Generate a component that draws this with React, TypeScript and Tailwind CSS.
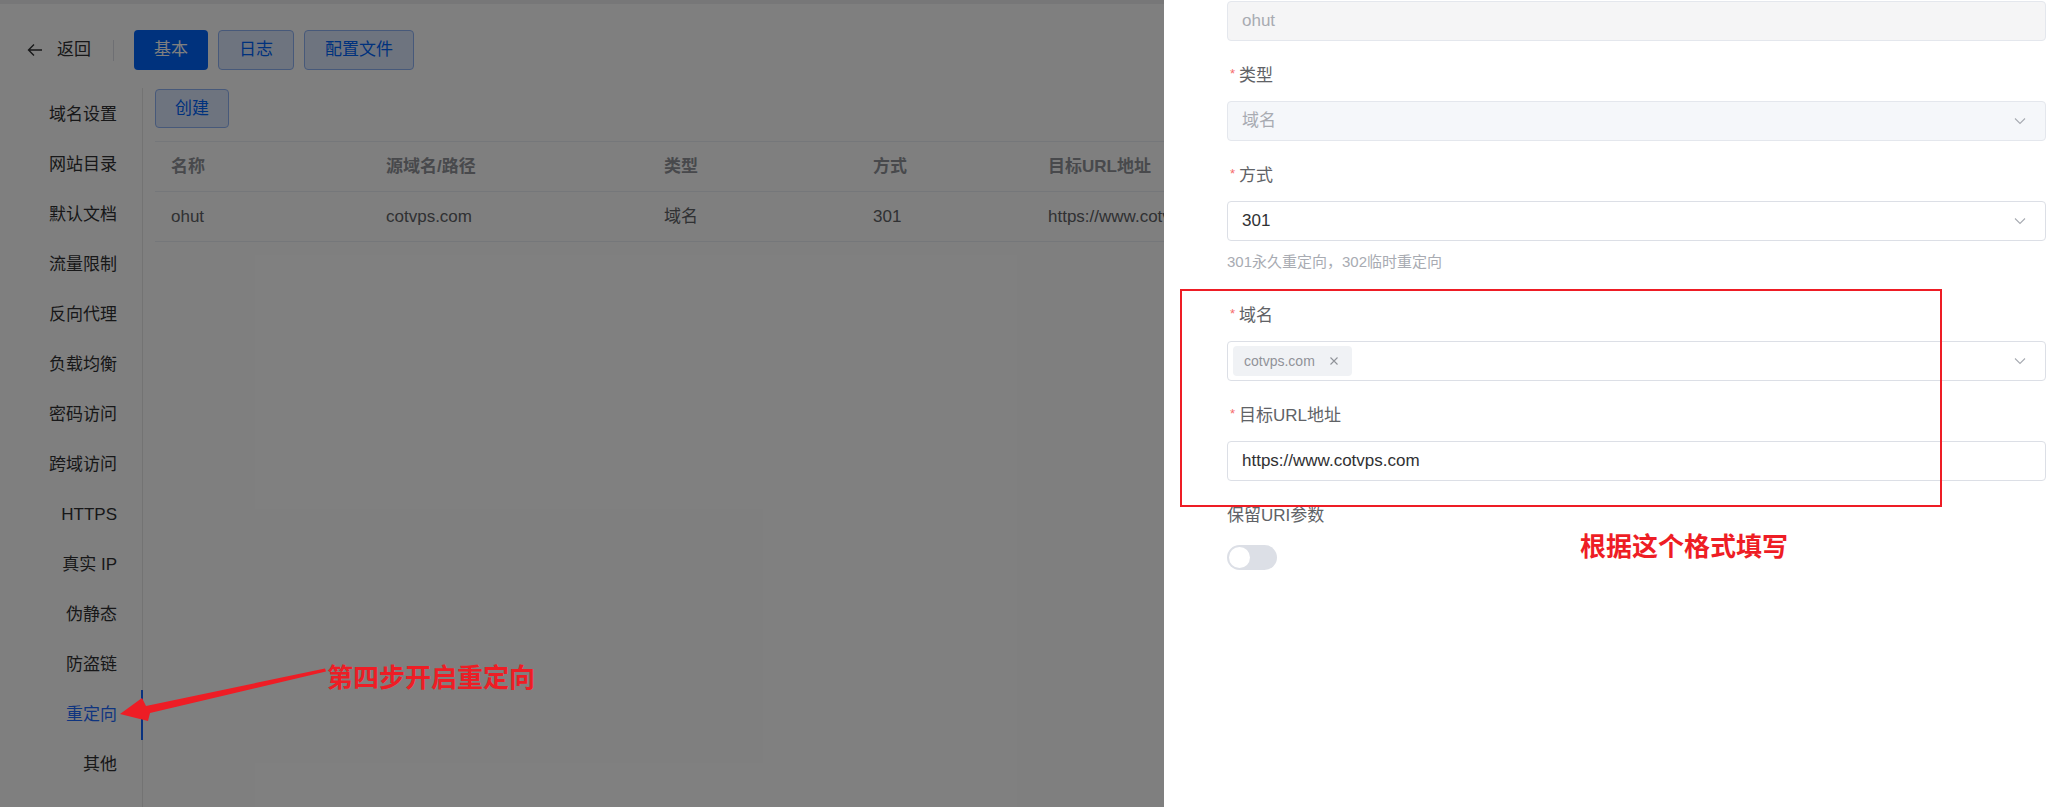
import { ReactNode } from 'react';

const menu = [
  '域名设置',
  '网站目录',
  '默认文档',
  '流量限制',
  '反向代理',
  '负载均衡',
  '密码访问',
  '跨域访问',
  'HTTPS',
  '真实 IP',
  '伪静态',
  '防盗链',
  '重定向',
  '其他',
];

const font = "font-['Liberation_Sans','Noto_Sans_CJK_SC',sans-serif]";

function Chevron() {
  return (
    <svg width="14" height="14" viewBox="0 0 14 14" fill="none" className="shrink-0">
      <path d="M2 4.5 L7 9.5 L12 4.5" stroke="#a8abb2" strokeWidth="1.1" />
    </svg>
  );
}

function Label({ children, required = true }: { children: ReactNode; required?: boolean }) {
  return (
    <div className="h-[26px] leading-[26px] mb-[12px] text-[17px] text-[#606266] flex items-center">
      {required && <span className="text-[#f56c6c] text-[13px] mr-[4px] ml-[3px] -mt-[4px]">*</span>}
      {children}
    </div>
  );
}

function Sidebar() {
  return (
    <ul className="w-[143px] shrink-0 border-r border-[#e6e6e6] pt-[2px]">
      {menu.map((item) => {
        const active = item === '重定向';
        return (
          <li
            key={item}
            className={
              'h-[50px] flex items-center justify-end pr-[24px] text-[17px] -mr-px border-r-2 ' +
              (active ? 'text-[#1f6bff] border-[#1364ff]' : 'text-[#303133] border-transparent')
            }
          >
            {item}
          </li>
        );
      })}
    </ul>
  );
}

function Table() {
  const cols = 'grid grid-cols-[215px_278px_209px_175px_1fr] h-[50px] items-center border-b border-[#ebeef5]';
  return (
    <div className="mt-[13px] border-t border-[#ebeef5] text-[17px]">
      <div className={cols + ' font-bold text-[#909399]'}>
        <div className="px-[16px]">名称</div>
        <div className="px-[16px]">源域名/路径</div>
        <div className="px-[16px]">类型</div>
        <div className="px-[16px]">方式</div>
        <div className="px-[16px]">目标URL地址</div>
      </div>
      <div className={cols + ' text-[#606266]'}>
        <div className="px-[16px]">ohut</div>
        <div className="px-[16px]">cotvps.com</div>
        <div className="px-[16px]">域名</div>
        <div className="px-[16px]">301</div>
        <div className="px-[16px] whitespace-nowrap">https://www.cotvps.com</div>
      </div>
    </div>
  );
}

function Drawer() {
  return (
    <div className="absolute right-0 top-0 h-full w-[905px] bg-white pl-[63px] pr-[23px] overflow-hidden">
      <div className="mt-px">
        <div className="mb-[22px]">
          <div className="h-[40px] rounded-[4px] border border-[#e4e7ed] bg-[#f5f5f6] px-[14px] flex items-center text-[17px] text-[#a8abb2]">
            ohut
          </div>
        </div>
        <div className="mb-[22px]">
          <Label>类型</Label>
          <div className="h-[40px] rounded-[4px] border border-[#e4e7ed] bg-[#f5f7fa] pl-[14px] pr-[18px] flex items-center justify-between text-[17px] text-[#a8abb2]">
            <span>域名</span>
            <Chevron />
          </div>
        </div>
        <div className="mb-[22px]">
          <Label>方式</Label>
          <div className="h-[40px] rounded-[4px] border border-[#dcdfe6] bg-white pl-[14px] pr-[18px] flex items-center justify-between text-[17px] text-[#303133]">
            <span>301</span>
            <Chevron />
          </div>
          <div className="mt-[8px] h-[26px] leading-[26px] text-[15px] text-[#a8abb2]">301永久重定向，302临时重定向</div>
        </div>
        <div className="mb-[22px] pt-[6px]">
          <Label>域名</Label>
          <div className="h-[40px] rounded-[4px] border border-[#dcdfe6] bg-white pl-[5px] pr-[18px] flex items-center justify-between">
            <span className="h-[30px] rounded-[4px] bg-[#f0f2f5] pl-[11px] pr-[13px] flex items-center gap-[14px] text-[14px] text-[#909399]">
              cotvps.com
              <svg width="10" height="10" viewBox="0 0 10 10" fill="none">
                <path d="M1.5 1.5 L8.5 8.5 M8.5 1.5 L1.5 8.5" stroke="#909399" strokeWidth="1.1" />
              </svg>
            </span>
            <Chevron />
          </div>
        </div>
        <div className="mb-[22px]">
          <Label>目标URL地址</Label>
          <div className="h-[40px] rounded-[4px] border border-[#dcdfe6] bg-white px-[14px] flex items-center text-[17px] text-[#303133]">
            https://www.cotvps.com
          </div>
        </div>
        <div>
          <Label required={false}>保留URI参数</Label>
          <div className="mt-[16px] w-[50px] h-[25px] rounded-full bg-[#dcdfe6] p-[2px] flex items-center">
            <span className="w-[21px] h-[21px] rounded-full bg-white" />
          </div>
        </div>
      </div>
    </div>
  );
}

export default function App() {
  return (
    <div className={'relative w-full h-[807px] overflow-hidden bg-white ' + font}>
      <div className="h-[4px] bg-[#eeeef0]" />
      <div className="mt-[26px] h-[40px] flex items-center pl-[27px]">
        <svg width="16" height="14" viewBox="0 0 16 14" fill="none">
          <path d="M15 7 H1.5 M7 1.5 L1.5 7 L7 12.5" stroke="#303133" strokeWidth="1.4" />
        </svg>
        <span className="ml-[14px] text-[17px] text-[#303133]">返回</span>
        <span className="ml-[22px] w-px h-[21px] bg-[#dcdfe6]" />
        <div className="ml-[20px] flex gap-[10px]">
          <button className="h-[40px] px-[20px] rounded-[4px] bg-[#0064fb] text-white text-[17px]">基本</button>
          <button className="h-[40px] px-[20px] rounded-[4px] bg-[#dde9ff] border border-[#8fb3f5] text-[#0064fb] text-[17px]">日志</button>
          <button className="h-[40px] px-[20px] rounded-[4px] bg-[#dde9ff] border border-[#8fb3f5] text-[#0064fb] text-[17px]">配置文件</button>
        </div>
      </div>
      <div className="mt-[18px] flex h-[719px]">
        <Sidebar />
        <div className="flex-1 pl-[12px] pt-[1px]">
          <button className="h-[39px] w-[74px] rounded-[4px] bg-[#dde9ff] border border-[#8fb3f5] text-[#0064fb] text-[17px]">创建</button>
          <Table />
        </div>
      </div>

      <div className="absolute inset-0 bg-black/50" />
      <Drawer />

      <div className="absolute left-[1180px] top-[289px] w-[762px] h-[218px] border-2 border-[#ee1d25]" />
      <div className="absolute left-[327px] top-[660px] text-[26px] leading-[32px] font-bold text-[#ee1d25] font-['Noto_Sans_CJK_SC',sans-serif]">
        第四步开启重定向
      </div>
      <div className="absolute left-[1580px] top-[529px] text-[26px] leading-[32px] font-bold text-[#ee1d25] font-['Noto_Sans_CJK_SC',sans-serif]">
        根据这个格式填写
      </div>
      <svg className="absolute left-0 top-0 pointer-events-none" width="400" height="807" viewBox="0 0 400 807">
        <polygon points="120,714 142,698 146,706 325,668.5 326,671.5 150,713 148,721" fill="#ee1d25" />
      </svg>
    </div>
  );
}
